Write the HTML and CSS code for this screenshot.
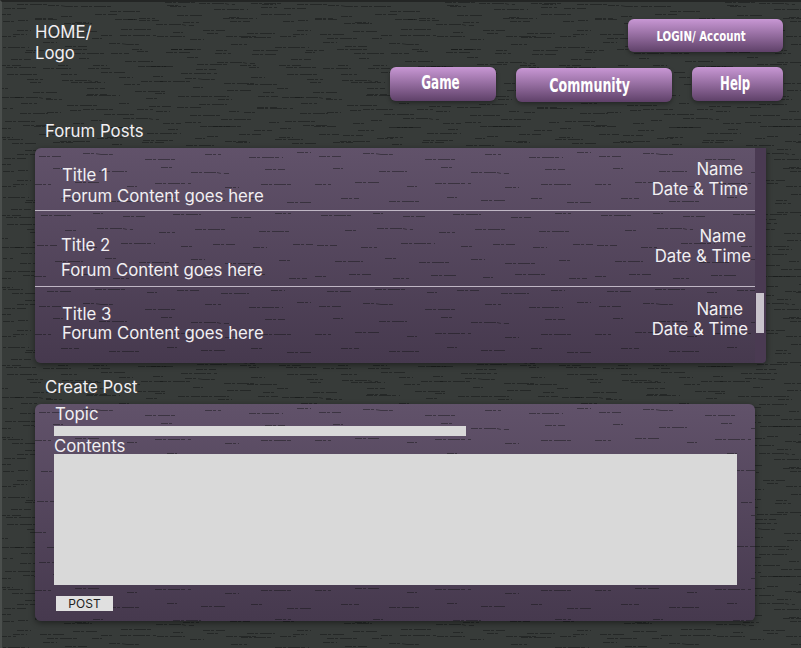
FILE: index.html
```html
<!DOCTYPE html>
<html lang="en">

<head>
    <meta charset="UTF-8">
    <meta name="viewport" content="width=device-width, initial-scale=1.0">
    <title>Forum</title>
    <link rel="stylesheet" href="styles.css">
</head>

<body>
    <div class="page">
        <div class="site-header">
            <a class="logo" href="#">HOME/<br>Logo</a>
            <div class="header-right">
                <a class="btn btn-login" href="#"><span>LOGIN/ Account</span></a>
                <div class="main-nav">
                    <a class="btn btn-game" href="#"><span>Game</span></a>
                    <a class="btn btn-community" href="#"><span>Community</span></a>
                    <a class="btn btn-help" href="#"><span>Help</span></a>
                </div>
            </div>
        </div>

        <div class="section-title forum-title">Forum Posts</div>
        <div class="forum-box">
            <div class="post-list">
                <div class="post post-1">
                    <div class="post-main">
                        <div>Title 1</div>
                        <div>Forum Content goes here</div>
                    </div>
                    <div class="post-meta">
                        <div class="post-name">Name</div>
                        <div>Date &amp; Time</div>
                    </div>
                </div>
                <div class="post post-2">
                    <div class="post-main">
                        <div>Title 2</div>
                        <div>Forum Content goes here</div>
                    </div>
                    <div class="post-meta">
                        <div class="post-name">Name</div>
                        <div>Date &amp; Time</div>
                    </div>
                </div>
                <div class="post post-3">
                    <div class="post-main">
                        <div>Title 3</div>
                        <div>Forum Content goes here</div>
                    </div>
                    <div class="post-meta">
                        <div class="post-name">Name</div>
                        <div>Date &amp; Time</div>
                    </div>
                </div>
            </div>
            <div class="scroll-track">
                <div class="scroll-thumb"></div>
            </div>
        </div>

        <div class="section-title create-title">Create Post</div>
        <div class="create-box">
            <label class="field-label topic-label" for="topic">Topic</label>
            <input class="topic-input" id="topic" type="text">
            <label class="field-label contents-label" for="contents">Contents</label>
            <textarea class="contents-input" id="contents"></textarea>
            <button class="post-btn">POST</button>
        </div>
    </div>
</body>

</html>
```

FILE: styles.css
```css
:root {
    /* rough wood grain, repeated over the page and panels */
    --grain: url("data:image/svg+xml,%3Csvg xmlns='http://www.w3.org/2000/svg' width='280' height='150'%3E%3Cg fill='none' stroke='%23101211' stroke-opacity='0.45' stroke-width='1' stroke-dasharray='7 1 3 2 12 1 4 3'%3E%3Cpath d='M4 8.5h22M48 5.5h12l6 1h14M110 11.5h30M170 6.5h16M214 9.5h34M262 4.5h14'/%3E%3Cpath d='M18 20.5h10M64 23.5h28M126 19.5h12M156 24.5h26l4 1h8M230 21.5h20'/%3E%3Cpath d='M0 36.5h16M40 34.5h24M92 38.5h10M120 35.5h36M190 39.5h14M226 36.5h30'/%3E%3Cpath d='M26 50.5h18M74 53.5h30M132 49.5h10M166 52.5h24M216 50.5h12M252 54.5h24'/%3E%3Cpath d='M6 67.5h30M58 65.5h10M88 68.5h22M138 66.5h28M196 69.5h20M240 65.5h16'/%3E%3Cpath d='M30 82.5h12M62 80.5h26l4 1h6M124 84.5h16M160 81.5h30M224 83.5h32'/%3E%3Cpath d='M2 97.5h20M46 99.5h16M86 95.5h34M146 98.5h12M178 96.5h22M218 99.5h14M258 96.5h20'/%3E%3Cpath d='M20 113.5h28M70 110.5h12M104 114.5h30M156 111.5h14M190 115.5h32M244 112.5h12'/%3E%3Cpath d='M0 128.5h12M34 126.5h22M78 130.5h16M116 127.5h26M168 129.5h10M200 126.5h30M254 130.5h18'/%3E%3Cpath d='M12 143.5h24M60 141.5h30M112 144.5h10M142 142.5h22M186 145.5h28M236 142.5h14'/%3E%3C/g%3E%3C/svg%3E");
}

html,
body {
    margin: 0;
    padding: 0;
    height: 100%;
}

body {
    width: 801px;
    height: 648px;
    overflow: hidden;
    font-family: "Inter", "Liberation Sans", sans-serif;
    font-size: 16.8px;
    color: #f1eff2;
    background-color: #373b39;
    background-image: var(--grain), var(--grain), var(--grain);
    background-position: 0 0, 137px 73px, 61px 38px;
    border-top: 2px solid #242625;
    border-left: 2px solid #4b4f4d;
    box-sizing: border-box;
}

.page {
    display: flex;
    flex-direction: column;
    padding: 0 18px 0 33px;
}

.site-header {
    display: flex;
    justify-content: space-between;
    height: 100px;
}

.logo {
    margin-top: 20px;
    line-height: 21px;
    color: #f1eff2;
    text-decoration: none;
}

.header-right {
    display: flex;
    flex-direction: column;
    align-items: flex-end;
    padding-top: 17px;
}

.main-nav {
    display: flex;
    align-items: flex-start;
    margin-top: 15px;
}

.btn {
    display: flex;
    align-items: center;
    justify-content: center;
    box-sizing: border-box;
    height: 34px;
    border-radius: 6px;
    background: linear-gradient(#c897d4, #5f4169);
    box-shadow: 0 2px 4px rgba(0, 0, 0, 0.35);
    color: #fff;
    font-family: "DejaVu Sans", sans-serif;
    font-stretch: condensed;
    font-weight: bold;
    text-decoration: none;
}

.btn span {
    display: block;
    white-space: nowrap;
    transform: scaleX(0.7);
}

.btn-login {
    width: 155px;
    padding-right: 8px;
    font-size: 14px;
}

.btn-login span {
    transform: scaleX(0.81);
}

.btn-game {
    width: 106px;
    padding-right: 6px;
    font-size: 19px;
}

.btn-game span {
    margin-top: -5px;
}

.btn-community {
    width: 156px;
    margin-top: 1px;
    margin-left: 20px;
    padding-right: 8px;
    font-size: 20px;
}

.btn-help {
    width: 91px;
    margin-left: 20px;
    padding-right: 5px;
    font-size: 20px;
}

.btn-help span {
    margin-top: -2px;
    transform: scaleX(0.65);
}

.section-title {
    padding-left: 10px;
    line-height: 20px;
}

.forum-title {
    margin-top: 19px;
}

.create-title {
    margin-top: 14px;
}

.forum-box {
    display: flex;
    width: 731px;
    height: 215px;
    margin-top: 7px;
    box-shadow: 0 2px 6px rgba(0, 0, 0, 0.45);
    border-radius: 6px 0 6px 6px;
}

.post-list {
    width: 720px;
    border-radius: 6px 0 0 6px;
    background-image: var(--grain), linear-gradient(#61526a, #46394e);
}

.post {
    display: flex;
    justify-content: space-between;
    box-sizing: border-box;
    border-bottom: 1px solid #bfb6c4;
}

.post-1 {
    height: 63px;
    padding: 0 7px 0 27px;
}

.post-2 {
    height: 76px;
    padding: 0 4px 0 26px;
}

.post-3 {
    height: 76px;
    padding: 0 7px 0 27px;
    border-bottom: none;
}

.post-main {
    line-height: 21px;
}

.post-meta {
    line-height: 20px;
    text-align: right;
}

.post-name {
    padding-right: 5px;
}

.post-1 .post-main {
    padding-top: 17px;
}

.post-1 .post-meta {
    padding-top: 11px;
}

.post-2 .post-main {
    padding-top: 22px;
    line-height: 25px;
}

.post-2 .post-meta {
    padding-top: 15px;
}

.post-3 .post-main {
    padding-top: 18px;
    line-height: 19px;
}

.post-3 .post-meta {
    padding-top: 12px;
}

.scroll-track {
    width: 11px;
    padding-top: 145px;
    box-sizing: border-box;
    background-color: #4a3a52;
    border-radius: 0 0 4px 0;
}

.scroll-thumb {
    width: 8px;
    height: 40px;
    margin-left: 1px;
    background-color: #c9c4cc;
}

.create-box {
    display: flex;
    flex-direction: column;
    align-items: flex-start;
    box-sizing: border-box;
    width: 720px;
    height: 217px;
    margin-top: 7px;
    padding: 0 18px 0 19px;
    border-radius: 6px;
    background-image: var(--grain), linear-gradient(#61526a, #46394e);
    box-shadow: 0 2px 6px rgba(0, 0, 0, 0.45);
}

.field-label {
    line-height: 20px;
}

.topic-label {
    margin-left: 1px;
}

.topic-input {
    width: 412px;
    height: 10px;
    margin: 2px 0 0;
    padding: 0;
    border: none;
    background-color: #d9d9d9;
}

.contents-input {
    display: block;
    width: 683px;
    height: 131px;
    margin: -2px 0 0;
    padding: 0;
    border: none;
    border-radius: 0;
    resize: none;
    background-color: #d9d9d9;
}

.post-btn {
    width: 57px;
    height: 15px;
    margin: 11px 0 0 2px;
    padding: 0;
    border: none;
    background-color: #e0e0e0;
    color: #222;
    font-family: "Inter", "Liberation Sans", sans-serif;
    font-size: 12px;
    line-height: 15px;
}
```
